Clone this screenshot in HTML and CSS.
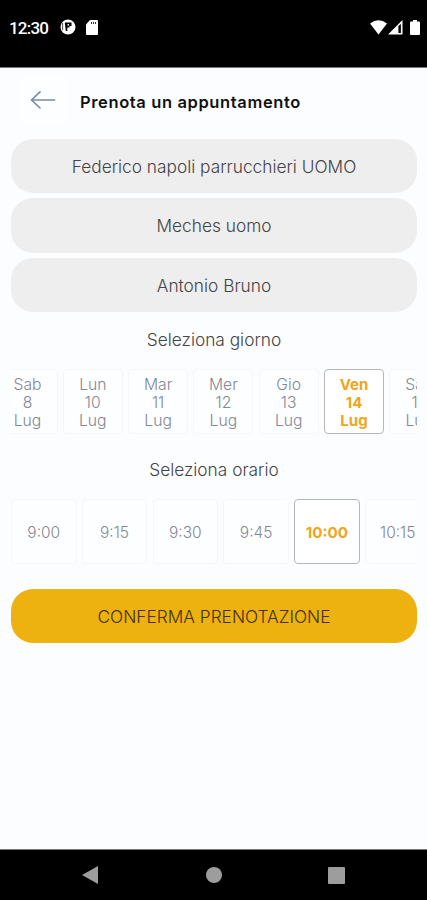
FILE: index.html
```html
<!DOCTYPE html>
<html lang="it">
<head>
<meta charset="utf-8">
<title>Prenota un appuntamento</title>
<link rel="stylesheet" href="styles.css">
</head>
<body>
<div class="status">
  <span class="clock">12:30</span>
  <svg class="app" width="16" height="16" viewBox="0 0 16 16"><circle cx="8" cy="8" r="7.500" fill="#fff"/><path d="M4.800 3.500h2.500v8.500H5.800zM7 3.500h4.500v3.500H9.500v1.500H7z" fill="#000"/><circle cx="8.300" cy="5.800" r=".9" fill="#fff"/><path d="M2.600 4v7" stroke="#000" stroke-width=".7"/></svg>
  <svg class="sd" width="12" height="15" viewBox="0 0 12 15"><path d="M4 0h7q1 0 1 1v13q0 1-1 1H1q-1 0-1-1V4.500z" fill="#fff"/><path d="M5.500 2v2M7.500 2v2M9.500 2v2" stroke="#000" stroke-width=".8"/></svg>
  <span class="spacer"></span>
  <svg width="17" height="15" viewBox="0 0 17 15"><path d="M0 3.500Q8.500-3 17 3.500L8.500 14.500z" fill="#fff"/></svg>
  <svg class="signal" width="15" height="15" viewBox="0 0 15 15"><path d="M14.500 0v14.500H0z" fill="#fff"/><path d="M10.400 6l2.500-2v9h-2.500z" fill="#000"/></svg>
  <svg class="battery" width="10" height="15" viewBox="0 0 10 15"><path d="M3 0h4v1.500h2q1 0 1 1V14q0 1-1 1H1q-1 0-1-1V2.500q0-1 1-1h2z" fill="#fff"/></svg>
</div>
<main>
  <header>
    <span class="back"><svg width="26" height="20" viewBox="0 0 26 20" fill="none" stroke="#7c89a3" stroke-width="1.700" stroke-linecap="round" stroke-linejoin="round"><path d="M24.500 10H1.500M10 1.800L1.500 10l8.500 8"/></svg></span>
    <h1>Prenota un appuntamento</h1>
  </header>
  <div class="choices">
    <div class="pill">Federico napoli parrucchieri UOMO</div>
    <div class="pill">Meches uomo</div>
    <div class="pill">Antonio Bruno</div>
  </div>
  <h2>Seleziona giorno</h2>
  <div class="strip days">
    <div class="card"><span>Sab</span><span>8</span><span>Lug</span></div>
    <div class="card"><span>Lun</span><span>10</span><span>Lug</span></div>
    <div class="card"><span>Mar</span><span>11</span><span>Lug</span></div>
    <div class="card"><span>Mer</span><span>12</span><span>Lug</span></div>
    <div class="card"><span>Gio</span><span>13</span><span>Lug</span></div>
    <div class="card selected"><span>Ven</span><span>14</span><span>Lug</span></div>
    <div class="card"><span>Sab</span><span>15</span><span>Lug</span></div>
  </div>
  <h2>Seleziona orario</h2>
  <div class="strip times">
    <div class="card">9:00</div>
    <div class="card">9:15</div>
    <div class="card">9:30</div>
    <div class="card">9:45</div>
    <div class="card selected">10:00</div>
    <div class="card">10:15</div>
  </div>
  <button class="confirm">CONFERMA PRENOTAZIONE</button>
</main>
<nav>
  <svg width="17" height="18" viewBox="0 0 17 18"><path d="M0 9L16 0v18z" fill="#9d9d9d"/></svg>
  <svg width="16" height="16" viewBox="0 0 16 16"><circle cx="8" cy="8" r="8" fill="#9d9d9d"/></svg>
  <svg width="17" height="17" viewBox="0 0 17 17"><rect width="17" height="17" rx="1" fill="#9d9d9d"/></svg>
</nav>
</body>
</html>
```
FILE: styles.css
```css
* { box-sizing: border-box; }
body {
  margin: 0;
  height: 900px;
  display: flex;
  flex-direction: column;
  overflow: hidden;
  background: #fcfdff;
  font-family: Inter, sans-serif;
  font-weight: 300;
}
svg { display: block; flex: none; }
.status {
  height: 68px;
  flex: none;
  display: flex;
  align-items: flex-start;
  padding: 20px 7px 0 9px;
  background: #000;
  border-bottom: 1px solid #777;
}
.clock {
  width: 51px;
  font: 500 17px/17px Roboto, sans-serif;
  letter-spacing: -0.8px;
  color: #fff;
}
.app { margin-top: -1px; }
.sd { margin-left: 10px; }
.spacer { flex: 1; }
.signal { margin-left: 1px; }
.battery { margin-left: 7px; }
main { flex: 1; padding: 0 10px 0 11px; }
header {
  height: 70.500px;
  display: flex;
  align-items: center;
}
.back {
  width: 48px;
  height: 48px;
  margin: -7px 11px 0 8px;
  display: flex;
  align-items: center;
  justify-content: center;
  background: #fdfeff;
}
h1 {
  margin: -2px 0 0 2px;
  font-size: 16.500px;
  line-height: 24px;
  font-weight: 600;
  letter-spacing: 0.620px;
  color: #111;
  white-space: nowrap;
}
.choices { display: grid; gap: 5px; }
.pill {
  height: 54.500px;
  padding-top: 1px;
  border-radius: 22px;
  display: flex;
  align-items: center;
  justify-content: center;
  background: #eee;
  color: #444;
  font-size: 17.300px;
}
h2 {
  margin: 16px 0 17px;
  text-align: center;
  font-size: 17.300px;
  line-height: 24px;
  font-weight: 300;
  color: #444;
}
.days + h2 { margin-top: 24px; }
.strip {
  display: flex;
  gap: 5.300px;
  height: 65px;
  overflow: hidden;
}
.card {
  flex: none;
  display: flex;
  flex-direction: column;
  align-items: center;
  justify-content: center;
  padding-top: 3px;
  border: 1px solid #f5f6f8;
  border-radius: 4px;
  background: #fdfeff;
  font-size: 15.700px;
  line-height: 18px;
  color: #858792;
}
.days .card { width: 60px; }
.days .card:first-child { margin-left: -13.500px; }
.times .card { width: 65.500px; font-size: 15.500px; }
.card.selected {
  border-color: #b5b6b9;
  background: #fff;
  color: #efa51c;
  font-weight: 700;
}
.days .card.selected { font-size: 15px; }
.times .card.selected { font-size: 15.200px; }
.confirm {
  width: 100%;
  height: 54px;
  margin-top: 25px;
  padding: 2px 0 0;
  display: block;
  border: 0;
  border-radius: 22px;
  background: #edb110;
  color: #44320a;
  font: 300 17.300px/24px Inter, sans-serif;
}
nav {
  height: 51px;
  flex: none;
  display: flex;
  align-items: center;
  justify-content: space-between;
  padding: 0 82px;
  background: #000;
  border-top: 1px solid #777;
}
```
